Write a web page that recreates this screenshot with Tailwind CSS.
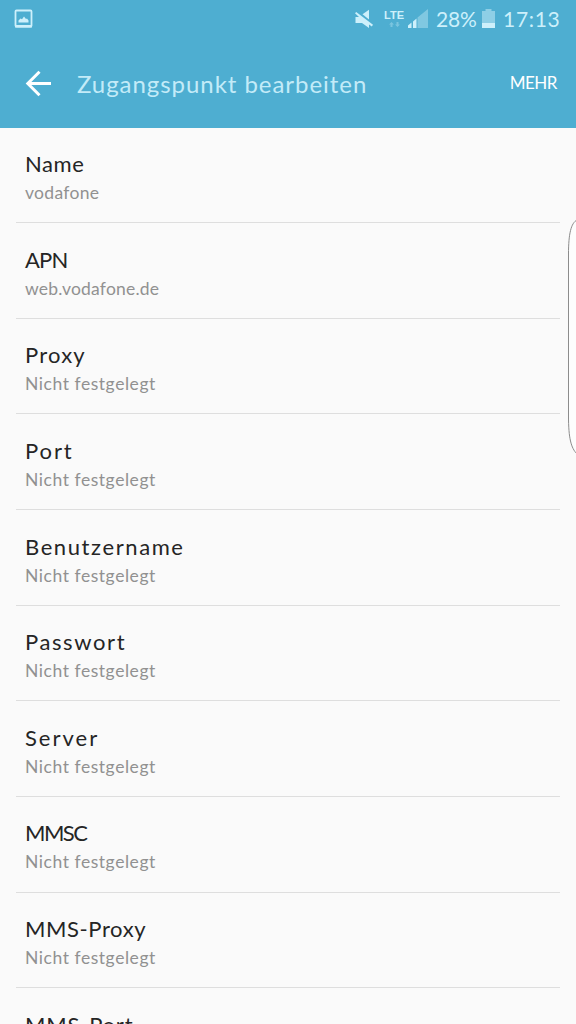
<!DOCTYPE html>
<html lang="de">
<head>
    <meta charset="UTF-8">
    <meta name="viewport" content="width=device-width, initial-scale=1.0">
    <title>Zugangspunkt bearbeiten</title>
    <script src="https://cdn.jsdelivr.net/npm/@tailwindcss/browser@4"></script>
</head>
<body class="bg-[#fafafa] font-['Lato',sans-serif]">
    <div class="relative w-[576px] h-[1024px] overflow-hidden">
        <!-- Header -->
        <header class="h-[127.5px] bg-[#4eaed1]">
            <!-- Status Bar -->
            <div class="h-[38px] pl-[14px] pr-4 flex items-center text-[#cdf0fb]">
                <svg class="w-5 h-5" viewBox="0 0 20 20" fill="none">
                    <rect x="1.5" y="1.5" width="16" height="16" rx="1" stroke="currentColor" stroke-width="1.8"/>
                    <path d="M1 16h17v2.5H1z" fill="currentColor"/>
                    <path d="M4.5 13.500v-2l2-2 1.500.8 2-2.800 2 2.500 1-.5 1.500 2v2z" fill="currentColor"/>
                </svg>
                <svg class="ml-auto w-5 h-5" viewBox="0 0 20 20" fill="currentColor">
                    <path d="M8.500 5.300 15 .8V10.500z"/>
                    <path d="M1 4.200 2.200 3 19 15.800 17.800 17.500 15 15.500V19L8 14H1.500V8H5z"/>
                </svg>
                <div class="ml-[9px] w-[22px] flex flex-col items-center">
                    <span class="font-['Liberation_Sans',sans-serif] text-[11px] leading-[12px] font-bold -mt-[2px]">LTE</span>
                    <svg class="mt-px w-[11px] h-[6px] opacity-35" viewBox="0 0 11 6" fill="currentColor">
                        <path d="M2.500 0 5 2.500H3.500V5h-2V2.500H0z"/>
                        <path d="M8.500 5 6 2.500h1.500V0h2v2.500H11z"/>
                    </svg>
                </div>
                <svg class="ml-[3px] w-5 h-5" viewBox="0 0 20 20" fill="currentColor">
                    <path d="M0 19v-2.500L3.500 13.500V19z"/>
                    <path d="M5 19v-6.500L8.500 9.500V19z"/>
                    <path d="M9.500 19V8.500L20 0v19z" opacity=".4"/>
                </svg>
                <span class="ml-[8px] w-[41px] text-[21px] leading-6 tracking-[-0.2px]">28%</span>
                <svg class="ml-[5px] w-[13px] h-5" viewBox="0 0 13 20" fill="currentColor">
                    <path d="M0 2h3.500V0h6v2H13v12H0z" opacity=".5"/>
                    <path d="M0 14h13v5H0z"/>
                </svg>
                <span class="ml-[8px] w-[57px] text-[21px] leading-6 tracking-[0.7px]">17:13</span>
            </div>
            <!-- App Bar -->
            <div class="h-[90px] pl-[25px] pr-[19px] flex items-center">
                <svg class="w-[27px] h-[27px]" viewBox="0 0 27 27" fill="none" stroke="#fff" stroke-width="3">
                    <path d="M26 13.500H3M14.500 1.800 2.800 13.500 14.500 25.200"/>
                </svg>
                <h1 class="ml-[25px] mt-px text-[24px] leading-8 tracking-[0.95px] text-[#c3ebf8] whitespace-nowrap">Zugangspunkt bearbeiten</h1>
                <button class="ml-auto text-[17px] tracking-[-0.5px] text-white">MEHR</button>
            </div>
        </header>

        <!-- Settings List -->
        <ul class="mx-4 text-[22px] leading-[28px] text-[#252525] whitespace-nowrap">
            <li class="h-[95.65px] pt-[22.5px] pl-[9px] border-b border-[#dedede]">
                <p class="tracking-[0.6px]">Name</p>
                <p class="text-[17.5px] leading-[29px] tracking-[0.3px] text-[#919191]">vodafone</p>
            </li>
            <li class="h-[95.65px] pt-[22.5px] pl-[9px] border-b border-[#dedede]">
                <p class="tracking-[-0.8px]">APN</p>
                <p class="text-[17.5px] leading-[29px] tracking-[0.2px] text-[#919191]">web.vodafone.de</p>
            </li>
            <li class="h-[95.65px] pt-[22.5px] pl-[9px] border-b border-[#dedede]">
                <p class="tracking-[1.2px]">Proxy</p>
                <p class="text-[17.5px] leading-[29px] tracking-[0.55px] text-[#919191]">Nicht festgelegt</p>
            </li>
            <li class="h-[95.65px] pt-[22.5px] pl-[9px] border-b border-[#dedede]">
                <p class="tracking-[1.9px]">Port</p>
                <p class="text-[17.5px] leading-[29px] tracking-[0.55px] text-[#919191]">Nicht festgelegt</p>
            </li>
            <li class="h-[95.65px] pt-[22.5px] pl-[9px] border-b border-[#dedede]">
                <p class="tracking-[1.6px]">Benutzername</p>
                <p class="text-[17.5px] leading-[29px] tracking-[0.55px] text-[#919191]">Nicht festgelegt</p>
            </li>
            <li class="h-[95.65px] pt-[22.5px] pl-[9px] border-b border-[#dedede]">
                <p class="tracking-[1.6px]">Passwort</p>
                <p class="text-[17.5px] leading-[29px] tracking-[0.55px] text-[#919191]">Nicht festgelegt</p>
            </li>
            <li class="h-[95.65px] pt-[22.5px] pl-[9px] border-b border-[#dedede]">
                <p class="tracking-[2px]">Server</p>
                <p class="text-[17.5px] leading-[29px] tracking-[0.55px] text-[#919191]">Nicht festgelegt</p>
            </li>
            <li class="h-[95.65px] pt-[22.5px] pl-[9px] border-b border-[#dedede]">
                <p class="tracking-[-1.5px]">MMSC</p>
                <p class="text-[17.5px] leading-[29px] tracking-[0.55px] text-[#919191]">Nicht festgelegt</p>
            </li>
            <li class="h-[95.65px] pt-[22.5px] pl-[9px] border-b border-[#dedede]">
                <p class="tracking-[0.6px]">MMS-Proxy</p>
                <p class="text-[17.5px] leading-[29px] tracking-[0.55px] text-[#919191]">Nicht festgelegt</p>
            </li>
            <li class="h-[95.65px] pt-[22.5px] pl-[9px]">
                <p class="tracking-[0.8px]">MMS-Port</p>
            </li>
        </ul>

        <!-- Edge Panel Handle -->
        <svg class="absolute right-0 top-[216px] w-[10px] h-[242px]" viewBox="0 0 10 242" fill="#fdfdfd" stroke="#8c8c8c" stroke-width="1">
            <path d="M11 4C5 7 2.500 18 2.500 38V200C2.500 222 5 232 11 238"/>
        </svg>
    </div>
</body>
</html>
